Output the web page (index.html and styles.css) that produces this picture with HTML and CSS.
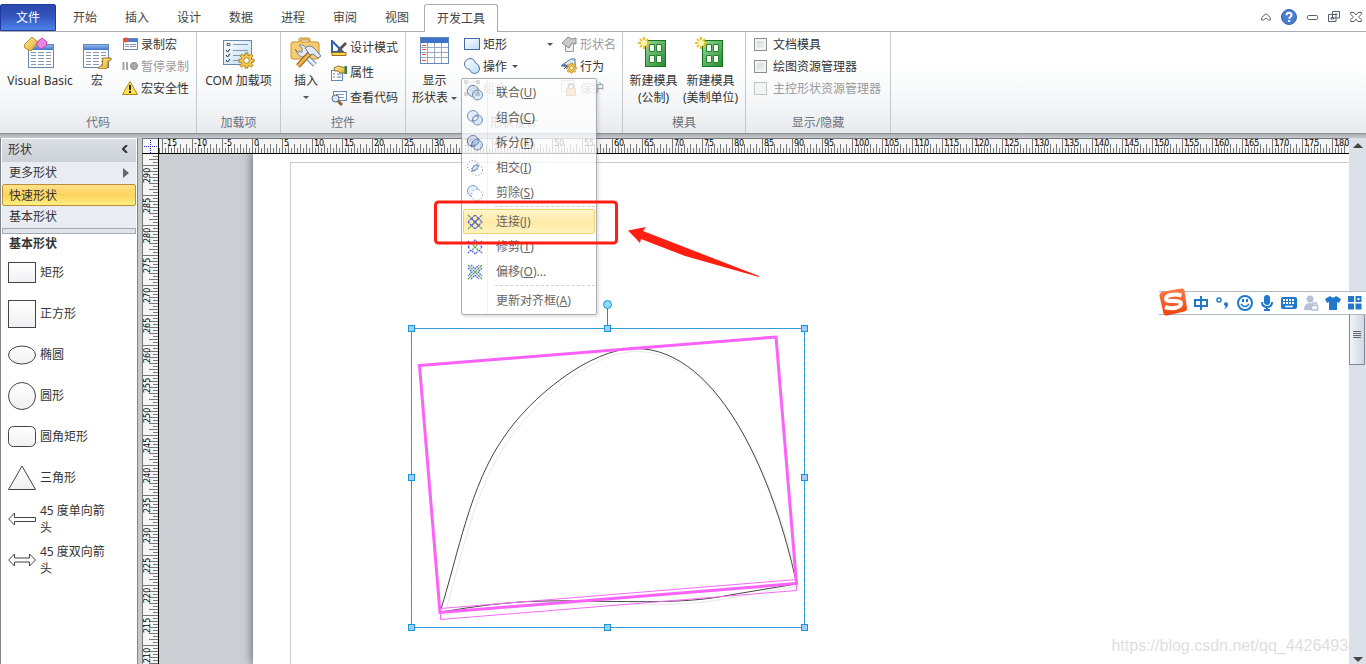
FILE: index.html
```html
<!DOCTYPE html>
<html lang="zh-CN">
<head>
<meta charset="utf-8">
<title>开发工具</title>
<link rel="stylesheet" href="styles.css">
</head>
<body>
<svg class="defs" aria-hidden="true">
  <defs>
    <linearGradient id="gBlue" x1="0" y1="0" x2="0" y2="1"><stop offset="0" stop-color="#8fb8f0"/><stop offset="1" stop-color="#3f74cc"/></linearGradient>
    <linearGradient id="gPane" x1="0" y1="0" x2="1" y2="1"><stop offset="0" stop-color="#ffffff"/><stop offset="1" stop-color="#bcdcf3"/></linearGradient>
    <linearGradient id="gGold" x1="0" y1="0" x2="1" y2="1"><stop offset="0" stop-color="#fff0a0"/><stop offset="1" stop-color="#e0a526"/></linearGradient>
    <linearGradient id="gGreen" x1="0" y1="0" x2="1" y2="1"><stop offset="0" stop-color="#9ad89a"/><stop offset="1" stop-color="#258a2c"/></linearGradient>
    <linearGradient id="gShape" x1="0" y1="0" x2="0" y2="1"><stop offset="0" stop-color="#ffffff"/><stop offset="1" stop-color="#f0f0f2"/></linearGradient>
    <linearGradient id="gSogou" x1="0" y1="0" x2="0" y2="1"><stop offset="0" stop-color="#ff7a45"/><stop offset="1" stop-color="#ec4410"/></linearGradient>
    <symbol id="table" viewBox="0 0 26 24">
      <rect x=".5" y=".5" width="25" height="23" fill="#fff" stroke="#6686b4"/>
      <rect x="1" y="1" width="24" height="5" fill="url(#gBlue)"/>
      <path d="M3 8.500h5M10 8.500h6M18 8.500h5M3 11.500h5M10 11.500h6M18 11.500h5M3 14.500h5M10 14.500h6M18 14.500h5M3 17.500h5M10 17.500h6M18 17.500h5M3 20.500h5M10 20.500h6M18 20.500h5" stroke="#8795b0"/>
    </symbol>
    <symbol id="gear" viewBox="0 0 18 18">
      <path d="M7.500 1h3v2.500l1.500.7 2-2 2 2-2 2 .7 1.500H17v3h-2.300l-.7 1.500 2 2-2 2-2-2-1.500.7V17h-3v-2.100L6 14.200l-2 2-2-2 2-2-.7-1.500H1v-3h2.300L4 6.200l-2-2 2-2 2 2 1.500-.7z" fill="#f7cb52" stroke="#a8770e"/>
      <circle cx="9" cy="9" r="3" fill="#fff" stroke="#a8770e"/>
    </symbol>
    <symbol id="stencil" viewBox="0 0 28 32">
      <rect x="7.500" y="3.500" width="20" height="26" fill="url(#gGreen)" stroke="#12761d"/>
      <path d="M11.500 7.500h5v7h-5zM18.500 7.500h5v7h-5zM11.500 18.500h5v7h-5zM18.500 18.500h5v7h-5z" fill="#f4fbf4" stroke="#26842c"/>
      <path d="M6 0v12M0 6h12M2 2l8 8M10 2l-8 8" stroke="#ecc02a" stroke-width="2"/>
      <circle cx="6" cy="6" r="3" fill="#fff8ae"/>
    </symbol>
    <symbol id="pair" viewBox="0 0 16 16">
      <circle cx="6" cy="6" r="5.500" fill="#e3eefb" stroke="#4a6ea8"/><circle cx="10.500" cy="10" r="5" fill="#c8dcf4" fill-opacity=".8" stroke="#4a6ea8"/>
    </symbol>
    <symbol id="hatch" viewBox="0 0 16 16">
      <path d="M1 1l14 14M15 1L1 15" stroke="#1f861f" stroke-width="1.200" stroke-dasharray="3 .5"/>
    </symbol>
  </defs>
</svg>

<div class="app">
  <header class="tabs">
    <nav class="tab-list">
      <button class="tab file">文件</button>
      <button class="tab">开始</button>
      <button class="tab">插入</button>
      <button class="tab">设计</button>
      <button class="tab">数据</button>
      <button class="tab">进程</button>
      <button class="tab">审阅</button>
      <button class="tab">视图</button>
      <button class="tab active">开发工具</button>
    </nav>
    <div class="window-tools">
      <button aria-label="收起功能区"><svg width="10" height="8" viewBox="0 0 10 8"><path d="M5 .7L9.300 4.500V7H7.500L5 5 2.500 7H.7V4.500z" fill="#fff" stroke="#55606c"/></svg></button>
      <button aria-label="帮助"><svg width="16" height="16" viewBox="0 0 16 16"><circle cx="8" cy="8" r="7.500" fill="#4a7fd0" stroke="#3564ae"/><path d="M5.500 6.300C5.500 2.800 10.700 3 10.500 6c-.1 1.700-2.300 1.700-2.300 3.800M8.200 11v2" fill="none" stroke="#fff" stroke-width="2"/></svg></button>
      <button aria-label="最小化"><svg width="11" height="6" viewBox="0 0 11 6"><rect x=".5" y="1.500" width="10" height="4" rx="1" fill="#fff" stroke="#55606c"/></svg></button>
      <button aria-label="还原"><svg width="12" height="11" viewBox="0 0 12 11"><path d="M4.500.5h7v6.500h-7zM.5 3.500h7.500v7H.5z" fill="#fff" stroke="#55606c"/><path d="M3 6.500h2.500v1.500H3zM7 3h2v1" fill="none" stroke="#55606c"/></svg></button>
      <button aria-label="关闭"><svg width="12" height="10" viewBox="0 0 12 10"><path d="M.7.500H4L6 3l2-2.500h3.300v1.800L8.500 5l2.800 2.700v1.800H8L6 7 4 9.500H.7V7.700L3.500 5 .7 2.300z" fill="#fff" stroke="#55606c"/></svg></button>
    </div>
  </header>

  <main class="ribbon">
    <section class="group g-code">
      <div class="group-body">
        <button class="big vb"><svg width="32" height="32" viewBox="0 0 32 32"><svg x="4" y="7" width="26" height="24"><use href="#table"/></svg><path d="M0 8L8 0l6 5-7 9-6-3z" fill="url(#gGold)" stroke="#c08a20"/><path d="M13 5l5-4 5 4-1 4-5 3-4-3z" fill="#ee82e0" stroke="#b846ac"/></svg><span>Visual Basic</span></button>
        <button class="big macro"><svg width="32" height="32" viewBox="0 0 32 32"><svg x="2" y="7" width="26" height="24"><use href="#table"/></svg><path d="M22 21h8q1 3-3 3v6q-1 2-4 2h-5q-1-3 3-3z" fill="url(#gGold)" stroke="#9b741b"/></svg><span>宏</span></button>
        <div class="stack">
          <button class="small"><svg width="16" height="16" viewBox="0 0 16 16"><rect x="1.500" y="2.500" width="14" height="11" fill="#fff" stroke="#6686b4"/><path d="M2 3h13v3H2z" fill="#4a7cd2"/><path d="M3 8.500h4M8 8.500h6M3 10.500h4M8 10.500h6" stroke="#8795b0"/><circle cx="4" cy="4" r="2.500" fill="#df5736"/></svg>录制宏</button>
          <button class="small" disabled><svg width="16" height="16" viewBox="0 0 16 16"><path d="M1.500 4v8M5 4v8" stroke="#a5a5a5" stroke-width="2"/><circle cx="12" cy="8" r="3.500" fill="#a9a9a9" stroke="#8f8f8f"/></svg>暂停录制</button>
          <button class="small"><svg width="16" height="16" viewBox="0 0 16 16"><path d="M8 1.500L15.500 14.500H.5z" fill="#ffe24e" stroke="#ae8412" stroke-linejoin="round"/><path d="M8 5v5M8 11v2" stroke="#222" stroke-width="2"/></svg>宏安全性</button>
        </div>
      </div>
      <h2>代码</h2>
    </section>

    <section class="group g-addin">
      <div class="group-body">
        <button class="big"><svg width="32" height="32" viewBox="0 0 32 32"><rect x=".5" y="3.500" width="28" height="24" fill="url(#gPane)" stroke="#6b87ae"/><path d="M4 6.500h3v2H4z" fill="none" stroke="#566a8c"/><path d="M10 7.500h15M10 13.500h15M10 18.500h8M10 23.500h6" stroke="#8495b5"/><path d="M3 13l1.500 2L7 12M3 18l1.500 2L7 17M3 23l1.500 2L7 22" fill="none" stroke="#222"/><svg x="15" y="15" width="17" height="17"><use href="#gear"/></svg></svg><span>COM 加载项</span></button>
      </div>
      <h2>加载项</h2>
    </section>

    <section class="group g-controls">
      <div class="group-body">
        <button class="big insert"><svg width="32" height="32" viewBox="0 0 32 32"><path d="M2 5h7V2q0-1 2-1h7q2 0 2 1v3h7q2 0 2 2v13q0 2-2 2H3q-2 0-2-2V7z" fill="#f7cd70" stroke="#c68f2b"/><path d="M11 3h8v2h-8z" fill="#fff" stroke="#bd8c37"/><path d="M12 15l13 13" stroke="#6285b1" stroke-width="5"/><path d="M12 15l13 13" stroke="#eaf3ff" stroke-width="3"/><path d="M5 12l3 3h4v-4L9 8q6-1 8 5t-3 7-9-8z" fill="#e5eaf2" stroke="#7385a1"/><path d="M20 16L8 29" stroke="#956116" stroke-width="5"/><path d="M20 16L8 29" stroke="#f1b54e" stroke-width="3"/><path d="M15 11q5-4 9 0l7 8-3 2-5-4-3 1z" fill="#e5eaf2" stroke="#6a7893"/></svg><span>插入</span><i class="caret"></i></button>
        <div class="stack loose">
          <button class="small"><svg width="16" height="16" viewBox="0 0 16 16"><path d="M1 1v11h11z" fill="#fff" stroke="#2c5fb4" stroke-width="2"/><path d="M14 2L7 9l-1 3 3-1 7-7z" fill="#555"/><path d="M1 12.500h14v3H1z" fill="#fbd34d" stroke="#94701e"/></svg>设计模式</button>
          <button class="small"><svg width="16" height="16" viewBox="0 0 16 16"><rect x=".5" y="5.500" width="11" height="10" fill="#fff" stroke="#6686b4"/><path d="M2 9h2M6 9h4M2 12h2M6 12h4" stroke="#5684c8"/><path d="M3 3l4-2 8 2v5H9L7 6H4z" fill="url(#gGold)" stroke="#94702a"/><path d="M13.500 1H16v8h-2.500z" fill="#31844a"/></svg>属性</button>
          <button class="small"><svg width="16" height="16" viewBox="0 0 16 16"><rect x="2.500" y="1.500" width="13" height="9" fill="#fff" stroke="#6686b4"/><path d="M5 4.500h8M8 7.500h5" stroke="#8795b0"/><circle cx="4.500" cy="8.500" r="3.500" fill="#dcebfb" stroke="#4a6894"/><path d="M7 11l4 4" stroke="#9b622e" stroke-width="3"/></svg>查看代码</button>
        </div>
      </div>
      <h2>控件</h2>
    </section>

    <section class="group g-design">
      <div class="group-body">
        <button class="big sheet"><svg width="32" height="32" viewBox="0 0 32 32"><rect x="1.500" y=".5" width="28" height="26" fill="#fff" stroke="#6686b4"/><path d="M2 1h27v5H2z" fill="#3d73c9"/><path d="M8.500 6v20M15.500 6v20M22.500 6v20M2 10.500h27M2 15.500h27M2 20.500h27" stroke="#9ba8bc"/><path d="M3 8.500h4M3 12.500h4M3 17.500h4M3 23.500h4" stroke="#e05336"/></svg><span>显示<br>形状表 <i class="caret"></i></span></button>
        <div class="stack ops">
          <button class="small split"><svg width="16" height="16" viewBox="0 0 16 16"><rect x=".5" y="2.500" width="15" height="11" fill="url(#gPane)" stroke="#3f6ca8"/></svg>矩形<i class="caret"></i></button>
          <div class="dropdown">
            <button class="small" aria-expanded="true"><svg width="16" height="16" viewBox="0 0 16 16"><path d="M6 .5q4 0 5.500 4.500 4 1.500 4 5 0 5-5 5.500-3.500 0-5-4Q.5 10 .5 6T6 .5z" fill="url(#gPane)" stroke="#4a72ac"/></svg>操作<i class="caret"></i></button>
            <div class="menu" role="menu">
              <button role="menuitem"><svg width="16" height="16"><use href="#pair"/></svg><span>联合(<u>U</u>)</span></button>
              <button role="menuitem"><svg width="16" height="16" viewBox="0 0 16 16"><use href="#pair"/><path d="M11 6q1 4-5 5-1-5 5-5z" fill="#fff" stroke="#4a6ea8"/></svg><span>组合(<u>C</u>)</span></button>
              <button role="menuitem"><svg width="16" height="16" viewBox="0 0 16 16"><use href="#pair"/><path d="M12 4q1 6-8 8 0-8 8-8z" fill="#9fbfe4" stroke="#3c62a0"/></svg><span>拆分(<u>F</u>)</span></button>
              <button role="menuitem"><svg width="16" height="16" viewBox="0 0 16 16"><g fill="none" stroke="#30548c" stroke-dasharray="1 2"><circle cx="6" cy="6" r="5.500"/><circle cx="10" cy="10" r="5.500"/></g><path d="M11 5q1 5-6 6 0-6 6-6z" fill="#c8dcf4" stroke="#3c62a0"/></svg><span>相交(<u>I</u>)</span></button>
              <button role="menuitem"><svg width="16" height="16" viewBox="0 0 16 16"><circle cx="6" cy="6" r="5.500" fill="#dceafa" stroke="#6484b4"/><circle cx="10" cy="10" r="5.500" fill="#fff" stroke="#30548c" stroke-dasharray="1 2"/></svg><span>剪除(<u>S</u>)</span></button>
              <hr>
              <button role="menuitem" class="hot"><svg width="16" height="16" viewBox="0 0 16 16"><use href="#hatch"/><path d="M4.500 4.500L8 1l3.500 3.500M1 8l3.500-3.500M1 8l3.500 3.500L8 15l3.500-3.500L15 8l-3.500-3.500M4.500 11.500L8 8l3.500 3.500M4.500 4.500L8 8l3.500-3.500" fill="none" stroke="#1a26e0" stroke-width="1.200" stroke-dasharray="2 .6"/></svg><span>连接(<u>J</u>)</span></button>
              <button role="menuitem"><svg width="16" height="16" viewBox="0 0 16 16"><path d="M4 4l8 8M12 4l-8 8" stroke="#1f861f" stroke-width="1.200" stroke-dasharray="2 .6"/><path d="M5 4l3-3 3 3M4 5L1 2M12 5l3-3M5 12l3 3 3-3M4 11l-3 3M12 11l3 3M1 8l2-2M1 8l2 2M15 8l-2-2M15 8l-2 2" fill="none" stroke="#1a26e0" stroke-width="1.200" stroke-dasharray="2 .6"/></svg><span>修剪(<u>T</u>)</span></button>
              <button role="menuitem"><svg width="16" height="16" viewBox="0 0 16 16"><use href="#hatch"/><path d="M4 1l4 4 4-4M1 4l4 4-4 4M15 4l-4 4 4 4M4 15l4-4 4 4" fill="none" stroke="#1a26e0" stroke-width="1.200" stroke-dasharray="2 .6"/></svg><span>偏移(<u>O</u>)...</span></button>
              <hr>
              <button role="menuitem" class="plain"><span>更新对齐框(<u>A</u>)</span></button>
            </div>
          </div>
          <button class="small" disabled><svg width="16" height="16" viewBox="0 0 16 16"><path d="M2 2h12v12H2z" fill="none" stroke="#888"/><path d="M0 0h4v4H0zM12 0h4v4h-4zM0 12h4v4H0zM12 12h4v4h-4z" fill="#666"/><path d="M5 5h5v5H5zM8 8h4v4H8z" fill="#ddd" stroke="#888"/></svg>组合</button>
        </div>
        <div class="stack">
          <button class="small" disabled><svg width="16" height="16" viewBox="0 0 16 16"><path d="M4.500 8v7.500h8V8" fill="#f0f0f0" stroke="#999"/><path d="M1 7l6-6 4 2 4-1v6l-4-1-3 5z" fill="#c9c9c9" stroke="#8c8c8c"/></svg>形状名</button>
          <button class="small"><svg width="16" height="16" viewBox="0 0 16 16"><path d="M1 7l9-6h4v9z" fill="url(#gPane)" stroke="#4a72ac"/><svg x="5" y="4" width="11" height="12"><use href="#gear"/></svg><path d="M0 8h5M3 6l3 2-3 3" fill="none" stroke="#34558c"/></svg>行为</button>
          <button class="small" disabled><svg width="16" height="16" viewBox="0 0 16 16"><path d="M.5.500h13v11H.5z" fill="#f3f3f3" stroke="#bbb"/><path d="M7.500 9V6q0-2 2.500-2t2.500 2v3" fill="none" stroke="#777" stroke-width="2"/><path d="M5.500 8.500h9v7h-9z" fill="#e6b56b" stroke="#a9803c"/></svg>保护</button>
        </div>
      </div>
      <h2 class="muted">形状设计</h2>
    </section>

    <section class="group g-stencil">
      <div class="group-body">
        <button class="big"><svg width="32" height="32"><use href="#stencil" width="28"/></svg><span>新建模具<br>(公制)</span></button>
        <button class="big"><svg width="32" height="32"><use href="#stencil" width="28"/></svg><span>新建模具<br>(美制单位)</span></button>
      </div>
      <h2>模具</h2>
    </section>

    <section class="group g-show">
      <div class="group-body">
        <div class="stack">
          <label class="check"><input type="checkbox">文档模具</label>
          <label class="check"><input type="checkbox">绘图资源管理器</label>
          <label class="check off"><input type="checkbox" disabled>主控形状资源管理器</label>
        </div>
      </div>
      <h2>显示/隐藏</h2>
    </section>
  </main>

  <div class="workspace">
    <aside class="shapes">
      <div class="shapes-head">形状<svg width="6" height="8" viewBox="0 0 6 8"><path d="M5 0L1 4l4 4" fill="none" stroke="#333" stroke-width="2"/></svg></div>
      <button class="row">更多形状<svg width="6" height="10" viewBox="0 0 6 10"><path d="M0 0l6 5-6 5z" fill="#666"/></svg></button>
      <button class="row selected">快速形状</button>
      <button class="row">基本形状</button>
      <div class="splitter"></div>
      <h3>基本形状</h3>
      <ul class="shape-list">
        <li><svg width="28" height="28"><rect x=".5" y="3.500" width="27" height="20" fill="url(#gShape)" stroke="#444"/></svg><span>矩形</span></li>
        <li><svg width="28" height="28"><rect x=".5" y=".5" width="27" height="27" fill="url(#gShape)" stroke="#444"/></svg><span>正方形</span></li>
        <li><svg width="28" height="28"><ellipse cx="14" cy="14" rx="13.500" ry="9" fill="url(#gShape)" stroke="#444"/></svg><span>椭圆</span></li>
        <li><svg width="28" height="28"><circle cx="14" cy="14" r="13.500" fill="url(#gShape)" stroke="#444"/></svg><span>圆形</span></li>
        <li><svg width="28" height="28"><rect x=".5" y="3.500" width="27" height="20" rx="5" fill="url(#gShape)" stroke="#444"/></svg><span>圆角矩形</span></li>
        <li><svg width="28" height="28"><path d="M14 2L27.500 25.500H.5z" fill="url(#gShape)" stroke="#444"/></svg><span>三角形</span></li>
        <li><svg width="28" height="28"><path d="M.7 14L6.500 8v4.500h21v4h-21V20z" fill="#fff" stroke="#444"/></svg><span>45 度单向箭头</span></li>
        <li><svg width="28" height="28"><path d="M.7 14L6.500 8v4h15V8l6 6-6 6v-4h-15v4z" fill="#fff" stroke="#444"/></svg><span>45 度双向箭头</span></li>
      </ul>
    </aside>

    <div class="editor">
      <div class="corner"></div>
      <div class="ruler-h"></div>
      <div class="ruler-v"></div>
      <div class="canvas">
        <div class="page"></div>
        <svg class="drawing" width="1190" height="510" viewBox="159 154 1190 510">
          <g fill="none">
            <path d="M445 613C462 557 474 489 508 441C534 402 592 351 637 351.500C723 352 778 488 798 584" stroke="#e9e9e9"/>
            <path d="M442 615C490 607 520 603 580 604C650 605 690 606 730 598L799 586" stroke="#e9e9e9"/>
            <path d="M441 609C458 555 470 485 504 437C530 398 590 348 636 348.500C722 349 775 485 796 581" stroke="#444"/>
            <path d="M441 612C490 604 520 600 580 601C650 602 690 603 730 595L796 584" stroke="#444"/>
            <path d="M440.500 608.500L796.500 579.500V590.500L440.500 619.500z" stroke="#f56cf5"/>
            <path d="M419.500 365.500L776 337L796.500 583.500L440 612.500z" stroke="#fb62fb" stroke-width="3"/>
            <rect x="411.500" y="328.500" width="393" height="299" stroke="#7e8b96"/>
            <rect x="411.500" y="328.500" width="393" height="299" stroke="#10a0f4" stroke-dasharray="4 2"/>
            <path d="M607.500 308v17" stroke="#1b8fd6"/>
          </g>
          <g fill="#a3cdf8" stroke="#1796dc">
            <circle cx="607.500" cy="304.500" r="4" fill="#8fdcff"/>
            <rect x="408.500" y="325.500" width="6" height="6"/><rect x="604.500" y="325.500" width="6" height="6"/><rect x="801.500" y="325.500" width="6" height="6"/>
            <rect x="408.500" y="474.500" width="6" height="6"/><rect x="801.500" y="474.500" width="6" height="6"/>
            <rect x="408.500" y="624.500" width="6" height="6"/><rect x="604.500" y="624.500" width="6" height="6"/><rect x="801.500" y="624.500" width="6" height="6"/>
          </g>
        </svg>
      </div>
    </div>
    <div class="scrollbar">
      <svg width="10" height="6" viewBox="0 0 10 6"><path d="M5 0l5 5H0z" fill="#444"/></svg>
      <div class="thumb"><i></i></div>
      <svg width="10" height="6" viewBox="0 0 10 6"><path d="M0 0h10L5 5z" fill="#444"/></svg>
    </div>
  </div>

  <div class="ime">
    <svg class="ime-logo" width="28" height="28" viewBox="0 0 28 28"><path d="M3 4L22 .5q3-.5 3.500 2L28 20q.3 3-2.500 3.500L8 27.500q-3 .5-3.500-2L.5 8Q0 5 3 4z" fill="url(#gSogou)"/><path d="M22.500 7.500C15 5 6.500 7.500 7 11c.5 4 14.500 0 15 4.500.3 4-9 6-16 3.500" fill="none" stroke="#fff" stroke-width="4"/></svg>
    <svg width="16" height="16" viewBox="0 0 16 16"><path d="M2 5h12v6H2zM8 1v14" fill="none" stroke="#2178cb" stroke-width="2"/></svg>
    <svg width="16" height="16" viewBox="0 0 16 16"><circle cx="4" cy="5" r="2" fill="none" stroke="#2178cb" stroke-width="1.500"/><path d="M9 8q4-2 4 1.500 0 3-4 4.500 2-2 1.500-3-2-.5-1.500-3z" fill="#2178cb"/></svg>
    <svg width="16" height="16" viewBox="0 0 16 16"><circle cx="8" cy="8" r="7" fill="none" stroke="#2178cb" stroke-width="2"/><path d="M6 4v3M10 4v3" stroke="#2178cb" stroke-width="2"/><path d="M4 9q4 5 8 0" fill="none" stroke="#2178cb" stroke-width="1.500"/></svg>
    <svg width="16" height="16" viewBox="0 0 16 16"><rect x="5" y="0" width="6" height="10" rx="3" fill="#2178cb"/><path d="M3 7q0 5 5 5t5-5M8 12v3M5 15h6" fill="none" stroke="#2178cb" stroke-width="2"/></svg>
    <svg width="16" height="16" viewBox="0 0 16 16"><rect y="2" width="16" height="12" rx="2" fill="#2178cb"/><path d="M2 5h12M2 8h12" stroke="#fff" stroke-width="2" stroke-dasharray="2 1"/><path d="M4 11.500h8" stroke="#fff" stroke-width="1.500"/></svg>
    <svg width="16" height="16" viewBox="0 0 16 16"><circle cx="7" cy="4" r="3.500" fill="#b7c0d8"/><path d="M1 15q0-7 6-7t6 7z" fill="#b7c0d8"/><path d="M8.500 10.500h6v4.500h-6zM10 10V8h3.500v2" fill="#fff" stroke="#b7c0d8" stroke-width="1.500"/></svg>
    <svg width="16" height="16" viewBox="0 0 16 16"><path d="M5 1q3 3 6 0l5 3-2 4-2-1v8H4V7L2 8 0 4z" fill="#2178cb"/></svg>
    <svg width="16" height="16" viewBox="0 0 16 16"><path d="M1 1h6v6H1zM1 8.500h6v6H1zM8.500 8.500h6v6h-6z" fill="#2178cb"/><path d="M9.500 2h4v4h-4z" fill="none" stroke="#2178cb" stroke-width="2"/></svg>
  </div>

  <svg class="notes" width="800" height="320" viewBox="0 0 800 320" aria-hidden="true">
    <rect x="435.500" y="202" width="181" height="41" rx="3" fill="none" stroke="#ff1e12" stroke-width="3"/>
    <path d="M628 230.500L646 227L643 231L759 276V277L685 256L641 239L640 243z" fill="#ff1e12"/>
  </svg>
  <div class="watermark">https://blog.csdn.net/qq_44264934</div>
</div>
<script src="rulers.js"></script>
</body>
</html>
```

FILE: styles.css
```css
* { box-sizing: border-box; }

body {
  margin: 0;
  font: 12px/17px "Noto Sans", "Noto Sans CJK SC", sans-serif;
  color: #333;
  overflow: hidden;
}

button {
  margin: 0;
  padding: 0;
  border: 0;
  background: none;
  font: inherit;
  color: inherit;
}

svg { flex: none; display: block; }
h2, h3, ul { margin: 0; padding: 0; font-size: 12px; font-weight: normal; }
.defs { position: absolute; width: 0; height: 0; }

.app {
  position: relative;
  display: flex;
  flex-direction: column;
  height: 100vh;
  overflow: hidden;
  background: #fff;
}

/* Tab strip */
.tabs {
  display: flex;
  justify-content: space-between;
  height: 32px;
  padding-top: 4px;
  border-bottom: 1px solid #a9adb3;
}
.tab-list { display: flex; }
.tab { width: 52px; height: 27px; color: #444; }
.tab.file {
  width: 56px;
  margin-right: 3px;
  border: 1px solid #20399c;
  border-radius: 2px 2px 0 0;
  background: linear-gradient(#2c48ae, #3255bd 45%, #4f83ea);
  color: #fff;
}
.tab.active {
  width: 74px;
  height: 28px;
  margin-left: 1px;
  border: 1px solid #a9adb3;
  border-bottom: 0;
  border-radius: 3px 3px 0 0;
  background: #fff;
}
.window-tools {
  display: flex;
  align-items: center;
  gap: 10px;
  padding: 0 4px 2px 0;
}

/* Ribbon */
.ribbon {
  display: flex;
  height: 102px;
  background: linear-gradient(#fff 35%, #f6f7f8 65%, #e8ebee);
  border-bottom: 1px solid #8b9097;
}
.group {
  display: flex;
  flex-direction: column;
  justify-content: space-between;
  border-right: 1px solid #c4c8ce;
}
.group h2 { line-height: 21px; text-align: center; color: #6b7280; }
.group h2.muted { color: #777; }
.group-body { display: flex; align-items: flex-start; }
.g-code { width: 197px; }
.g-addin { width: 84px; }
.g-controls { width: 125px; }
.g-design { width: 217px; }
.g-stencil { width: 123px; }
.g-show { width: 145px; }
.g-show .group-body { padding-left: 8px; }

.big {
  display: flex;
  flex-direction: column;
  align-items: center;
  gap: 3px;
  width: 57px;
  padding-top: 5px;
  white-space: nowrap;
}
.big.vb { width: 80px; }
.big.macro { width: 34px; margin-right: 8px; }
.g-addin .big { width: 83px; }
.big.insert { width: 50px; }
.g-stencil .group-body { padding-left: 2px; }
.big .caret { margin: 0; }
.big.insert .caret { margin-top: 4px; }

.stack { display: flex; flex-direction: column; padding-top: 1px; }
.stack.loose { padding-top: 3px; }
.stack.ops { width: 97px; }
.stack.ops .small { width: 97px; }
.small {
  display: flex;
  align-items: center;
  gap: 3px;
  height: 22px;
  white-space: nowrap;
}
.loose .small { height: 25px; }
.small:disabled { color: #9a9a9a; }
.sheet { margin-right: 1px; }
.split .caret { margin-left: auto; margin-right: 8px; }
.caret {
  display: inline-block;
  vertical-align: middle;
  margin-left: 2px;
  border: 3px solid transparent;
  border-top-color: #555;
  border-bottom: 0;
}

.check { display: flex; align-items: center; gap: 6px; height: 22px; }
.check.off { color: #9a9a9a; }
.check input {
  appearance: none;
  width: 13px;
  height: 13px;
  margin: 0;
  border: 1px solid #8a8f96;
  background: linear-gradient(135deg, #cfd3d8, #f6f6f6);
  box-shadow: inset 0 0 0 2px #f4f4f4;
}
.check.off input { border-color: #c2c4c8; background: #f4f4f4; }

/* Operations menu */
.dropdown { position: relative; }
.menu {
  position: absolute;
  z-index: 5;
  top: 23px;
  left: -3px;
  width: 136px;
  padding: 1px;
  border: 1px solid #90959c;
  border-radius: 2px;
  background: linear-gradient(90deg, #fff 25px, #d8dce2 25px, #fff 26px);
  box-shadow: 2px 2px 3px rgba(0, 0, 0, .15);
  opacity: .76;
}
.menu button {
  display: flex;
  align-items: center;
  gap: 13px;
  width: 100%;
  height: 25px;
  padding-left: 3px;
  border: 1px solid transparent;
  border-radius: 2px;
  color: #333;
  white-space: nowrap;
}
.menu .plain { padding-left: 32px; }
.menu .hot {
  border-color: #e8c64f;
  background: linear-gradient(#fff3ba, #ffe48c 50%, #fff0a8);
}
.menu hr { margin: 1px 0 2px 32px; border: 0; border-top: 1px dashed #c0c3c8; }

/* Workspace */
.workspace {
  display: flex;
  flex: 1;
  min-height: 0;
  padding-top: 4px;
  background: linear-gradient(#a9aeb4, #c6cacf 4px);
}
.shapes {
  display: flex;
  flex-direction: column;
  width: 138px;
  margin-right: 4px;
  padding: 1px 1px 0;
  border-left: 1px solid #80858c;
  border-right: 1px solid #80858c;
  background: #fff;
}
.shapes-head, .row {
  display: flex;
  align-items: center;
  justify-content: space-between;
  height: 22px;
  padding: 0 7px 1px;
  text-align: left;
}
.shapes-head {
  height: 23px;
  padding: 0 8px 3px 6px;
  background: linear-gradient(#dbe0e5, #cbd1d7);
}
.row { background: #e9edf3; }
.row.selected {
  border: 1px solid #c08c35;
  border-radius: 2px;
  padding: 0 6px;
  background: linear-gradient(#ffe28a, #ffd35f 50%, #fff080);
}
.splitter { height: 6px; border: 1px solid #a3a9b2; background: #dfe4eb; }
.shapes h3 { padding: 1px 7px 0; font-weight: bold; }
.shape-list { list-style: none; }
.shape-list li {
  display: grid;
  grid-template-columns: 28px 72px;
  gap: 4px;
  align-items: center;
  height: 41px;
  padding-left: 6px;
}

.editor {
  display: grid;
  flex: 1;
  min-width: 0;
  grid-template: 16px minmax(0, 1fr) / 17px minmax(0, 1fr);
}
.corner {
  border-left: 1px solid #777;
  border-top: 1px solid #777;
  border-right: 1px solid #000;
  border-bottom: 1px solid #000;
  background:
    repeating-linear-gradient(90deg, #2222c8 0 1px, transparent 1px 2px) center / 13px 1px no-repeat,
    repeating-linear-gradient(#2222c8 0 1px, transparent 1px 2px) center / 1px 13px no-repeat,
    #f7f8fa;
}
.ruler-h, .ruler-v { overflow: hidden; background: #f5f5f5; }
.ruler-h { border-bottom: 1px solid #000; border-top: 1px solid #777; }
.ruler-v { border-right: 1px solid #000; border-left: 1px solid #777; }
.ruler-label { font: 8px "DejaVu Sans", sans-serif; fill: #000; }
.canvas { position: relative; overflow: hidden; background: #cbcfd4; }
.page {
  height: 100%;
  margin-left: 94px;
  padding: 8px 0 0 37px;
  background: #fff;
  box-shadow: -2px 0 8px rgba(60, 65, 75, .6);
}
.page::before {
  content: "";
  display: block;
  height: 100%;
  border-top: 1px solid #ccc;
  border-left: 1px solid #ccc;
}
.drawing { position: absolute; top: 0; left: 0; }

.scrollbar {
  display: flex;
  flex-direction: column;
  align-items: center;
  width: 17px;
  padding: 5px 0 1px;
  background: #dbe0e9;
}
.thumb {
  display: flex;
  align-items: center;
  justify-content: center;
  width: 16px;
  height: 62px;
  margin: 154px 1px auto 0;
  border: 1px solid #80879a;
  background: linear-gradient(90deg, #f3f5f8, #cfd6e0);
}
.thumb i {
  width: 8px;
  height: 7px;
  background: repeating-linear-gradient(#666 0 1px, transparent 1px 2px);
}

/* Floating input-method bar */
.ime {
  position: absolute;
  z-index: 6;
  top: 291px;
  right: 0;
  display: flex;
  align-items: center;
  gap: 6px;
  height: 24px;
  padding-right: 3px;
  border-top: 1px solid #b4b8bf;
  border-bottom: 1px solid #b4b8bf;
  background: #fff;
}
.ime-logo { margin-bottom: 2px; }

.notes { position: absolute; z-index: 7; top: 0; left: 0; pointer-events: none; }
.watermark {
  position: absolute;
  z-index: 8;
  right: 9px;
  bottom: 9px;
  font: 16px/18px "Liberation Sans", sans-serif;
  color: #dedede;
}
```

FILE: rulers.js
```js
const NS = "http://www.w3.org/2000/svg";
const UNIT = 6;

function add(parent, name, attrs, text) {
  const el = document.createElementNS(NS, name);
  for (const key in attrs) el.setAttribute(key, attrs[key]);
  if (text !== undefined) el.textContent = text;
  parent.appendChild(el);
}

function tickLength(halfStep) {
  if (halfStep % 10 === 0) return 15;
  return halfStep % 2 === 0 ? 9 : 5;
}

function horizontalRuler(host, origin, from) {
  const svg = document.createElementNS(NS, "svg");
  const width = host.clientWidth;
  const to = Math.floor((width - origin) / UNIT);
  svg.setAttribute("width", width);
  svg.setAttribute("height", 14);
  let d = "";
  for (let h = from * 2; h <= to * 2; h++) {
    d += `M${origin + h * UNIT / 2 + 0.5} 14v-${tickLength(h)}`;
  }
  add(svg, "path", { d, stroke: "#777" });
  for (let v = Math.ceil(from / 5) * 5; v < to; v += 5) {
    add(svg, "text", { x: origin + v * UNIT + 2, y: 7, class: "ruler-label" }, v);
  }
  host.appendChild(svg);
}

function verticalRuler(host, top, first) {
  const svg = document.createElementNS(NS, "svg");
  const height = host.clientHeight;
  const last = first - Math.floor((height - top) / UNIT);
  svg.setAttribute("width", 15);
  svg.setAttribute("height", height);
  let d = "";
  for (let h = -3; h <= (first - last) * 2; h++) {
    d += `M15 ${top + h * UNIT / 2 + 0.5}h-${tickLength(h)}`;
  }
  add(svg, "path", { d, stroke: "#777" });
  for (let v = first; v > last; v -= 5) {
    const y = top + (first - v) * UNIT + 18;
    add(svg, "text", { transform: `translate(7 ${y}) rotate(-90)`, class: "ruler-label" }, v);
  }
  host.appendChild(svg);
}

horizontalRuler(document.querySelector(".ruler-h"), 93, -16);
verticalRuler(document.querySelector(".ruler-v"), 11, 290);
```
